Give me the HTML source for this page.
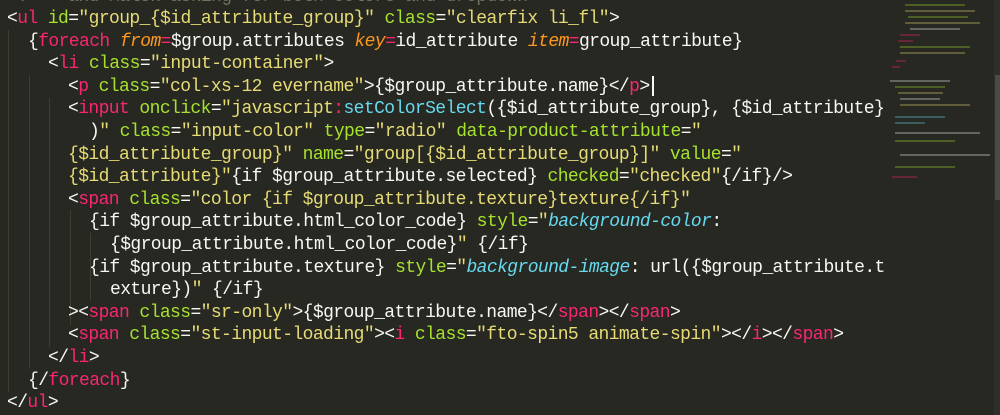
<!DOCTYPE html>
<html><head><style>
body{margin:0;width:1000px;height:415px;background:#272822;overflow:hidden;position:relative;font-family:"Liberation Mono",monospace;font-size:18px;letter-spacing:-0.6px;color:#f8f8f2}
.l{position:absolute;white-space:pre;height:22.6px;line-height:22.6px}
.t{color:#f92672}.a{color:#a6e22e}.s{color:#e6db74}.o{color:#fd971f;font-style:italic}.c{color:#66d9ef}.ci{color:#66d9ef;font-style:italic}.g{color:#75715e}
.guide{position:absolute;width:1px;background:#3e3d32}
.mm{position:absolute;height:2px;opacity:.3}
.cur{display:inline-block;width:2px;height:20px;background:#f8f8f2;vertical-align:middle;margin-left:2px}
</style></head><body>
<div class="guide" style="left:8px;top:30px;height:362px"></div>
<div class="guide" style="left:29px;top:75px;height:294px"></div>
<div class="guide" style="left:49px;top:98px;height:249px"></div>
<div class="guide" style="left:70px;top:210px;height:115px"></div>
<div class="guide" style="left:90px;top:233px;height:68px"></div>

<div class="l g" style="left:7px;top:-14px">&lt;!--  and Malek asking for both colors and dropdown --&gt;</div>
<div class="l" style="left:7px;top:8px">&lt;<span class="t">ul</span> <span class="a">id</span>=<span class="s">"group_{$id_attribute_group}"</span> <span class="a">class</span>=<span class="s">"clearfix li_fl"</span>&gt;</div>
<div class="l" style="left:28px;top:30.6px">{<span class="t">foreach</span> <span class="o">from</span><span class="t">=</span>$group.attributes <span class="o">key</span><span class="t">=</span>id_attribute <span class="o">item</span><span class="t">=</span>group_attribute}</div>
<div class="l" style="left:48px;top:53.2px">&lt;<span class="t">li</span> <span class="a">class</span>=<span class="s">"input-container"</span>&gt;</div>
<div class="l" style="left:68px;top:75.8px">&lt;<span class="t">p</span> <span class="a">class</span>=<span class="s">"col-xs-12 evername"</span>&gt;{$group_attribute.name}&lt;/<span class="t">p</span>&gt;<span class="cur"></span></div>
<div class="l" style="left:68px;top:98.4px">&lt;<span class="t">input</span> <span class="a">onclick</span>=<span class="s">"javascript</span><span class="t">:</span><span class="c">setColorSelect</span>({$id_attribute_group}, {$id_attribute}</div>
<div class="l" style="left:89px;top:121px">)<span class="s">"</span> <span class="a">class</span>=<span class="s">"input-color"</span> <span class="a">type</span>=<span class="s">"radio"</span> <span class="a">data-product-attribute</span>=<span class="s">"</span></div>
<div class="l s" style="left:68px;top:143.6px">{$id_attribute_group}"<span class="a"> name</span><span style="color:#f8f8f2">=</span>"group[{$id_attribute_group}]"<span class="a"> value</span><span style="color:#f8f8f2">=</span>"</div>
<div class="l" style="left:68px;top:166.2px"><span class="s">{$id_attribute}"</span>{if $group_attribute.selected} <span class="a">checked</span>=<span class="s">"checked"</span>{/if}/&gt;</div>
<div class="l" style="left:68px;top:188.8px">&lt;<span class="t">span</span> <span class="a">class</span>=<span class="s">"color {if $group_attribute.texture}texture{/if}"</span></div>
<div class="l" style="left:89px;top:211.4px">{if $group_attribute.html_color_code} <span class="a">style</span>=<span class="s">"</span><span class="ci">background-color</span>:</div>
<div class="l" style="left:110px;top:234px">{$group_attribute.html_color_code}<span class="s">"</span> {/if}</div>
<div class="l" style="left:89px;top:256.6px">{if $group_attribute.texture} <span class="a">style</span>=<span class="s">"</span><span class="ci">background-image</span>: url({$group_attribute.t</div>
<div class="l" style="left:110px;top:279.2px">exture})<span class="s">"</span> {/if}</div>
<div class="l" style="left:68px;top:301.8px">&gt;&lt;<span class="t">span</span> <span class="a">class</span>=<span class="s">"sr-only"</span>&gt;{$group_attribute.name}&lt;/<span class="t">span</span>&gt;&lt;/<span class="t">span</span>&gt;</div>
<div class="l" style="left:68px;top:324.4px">&lt;<span class="t">span</span> <span class="a">class</span>=<span class="s">"st-input-loading"</span>&gt;&lt;<span class="t">i</span> <span class="a">class</span>=<span class="s">"fto-spin5 animate-spin"</span>&gt;&lt;/<span class="t">i</span>&gt;&lt;/<span class="t">span</span>&gt;</div>
<div class="l" style="left:48px;top:347px">&lt;/<span class="t">li</span>&gt;</div>
<div class="l" style="left:28px;top:369.6px">{/<span class="t">foreach</span>}</div>
<div class="l" style="left:7px;top:392.2px">&lt;/<span class="t">ul</span>&gt;</div>

<div style="position:absolute;left:994px;top:0;width:6px;height:415px;background:#2e2f29"></div>
<div style="position:absolute;left:995px;top:75px;width:5px;height:125px;background:#4a4b44"></div>
<div class="mm" style="left:905px;top:4px;width:60px;background:#a6e22e"></div>
<div class="mm" style="left:905px;top:10px;width:70px;background:#e6db74"></div>
<div class="mm" style="left:908px;top:16px;width:60px;background:#a6e22e"></div>
<div class="mm" style="left:905px;top:22px;width:75px;background:#e6db74"></div>
<div class="mm" style="left:910px;top:28px;width:50px;background:#f8f8f2"></div>
<div class="mm" style="left:900px;top:34px;width:20px;background:#f92672"></div>
<div class="mm" style="left:898px;top:40px;width:15px;background:#f92672"></div>
<div class="mm" style="left:900px;top:46px;width:70px;background:#a6e22e"></div>
<div class="mm" style="left:900px;top:52px;width:65px;background:#e6db74"></div>
<div class="mm" style="left:896px;top:60px;width:10px;background:#f92672"></div>
<div class="mm" style="left:892px;top:66px;width:8px;background:#f92672"></div>
<div class="mm" style="left:890px;top:80px;width:60px;background:#f8f8f2"></div>
<div class="mm" style="left:895px;top:86px;width:50px;background:#a6e22e"></div>
<div class="mm" style="left:898px;top:92px;width:45px;background:#e6db74"></div>
<div class="mm" style="left:900px;top:98px;width:40px;background:#f8f8f2"></div>
<div class="mm" style="left:900px;top:104px;width:70px;background:#e6db74"></div>
<div class="mm" style="left:895px;top:116px;width:50px;background:#66d9ef"></div>
<div class="mm" style="left:895px;top:122px;width:30px;background:#66d9ef"></div>
<div class="mm" style="left:895px;top:132px;width:85px;background:#f8f8f2"></div>
<div class="mm" style="left:895px;top:140px;width:60px;background:#a6e22e"></div>
<div class="mm" style="left:900px;top:154px;width:90px;background:#f8f8f2"></div>
<div class="mm" style="left:895px;top:166px;width:60px;background:#a6e22e"></div>
<div class="mm" style="left:892px;top:176px;width:25px;background:#f92672"></div>
</body></html>
